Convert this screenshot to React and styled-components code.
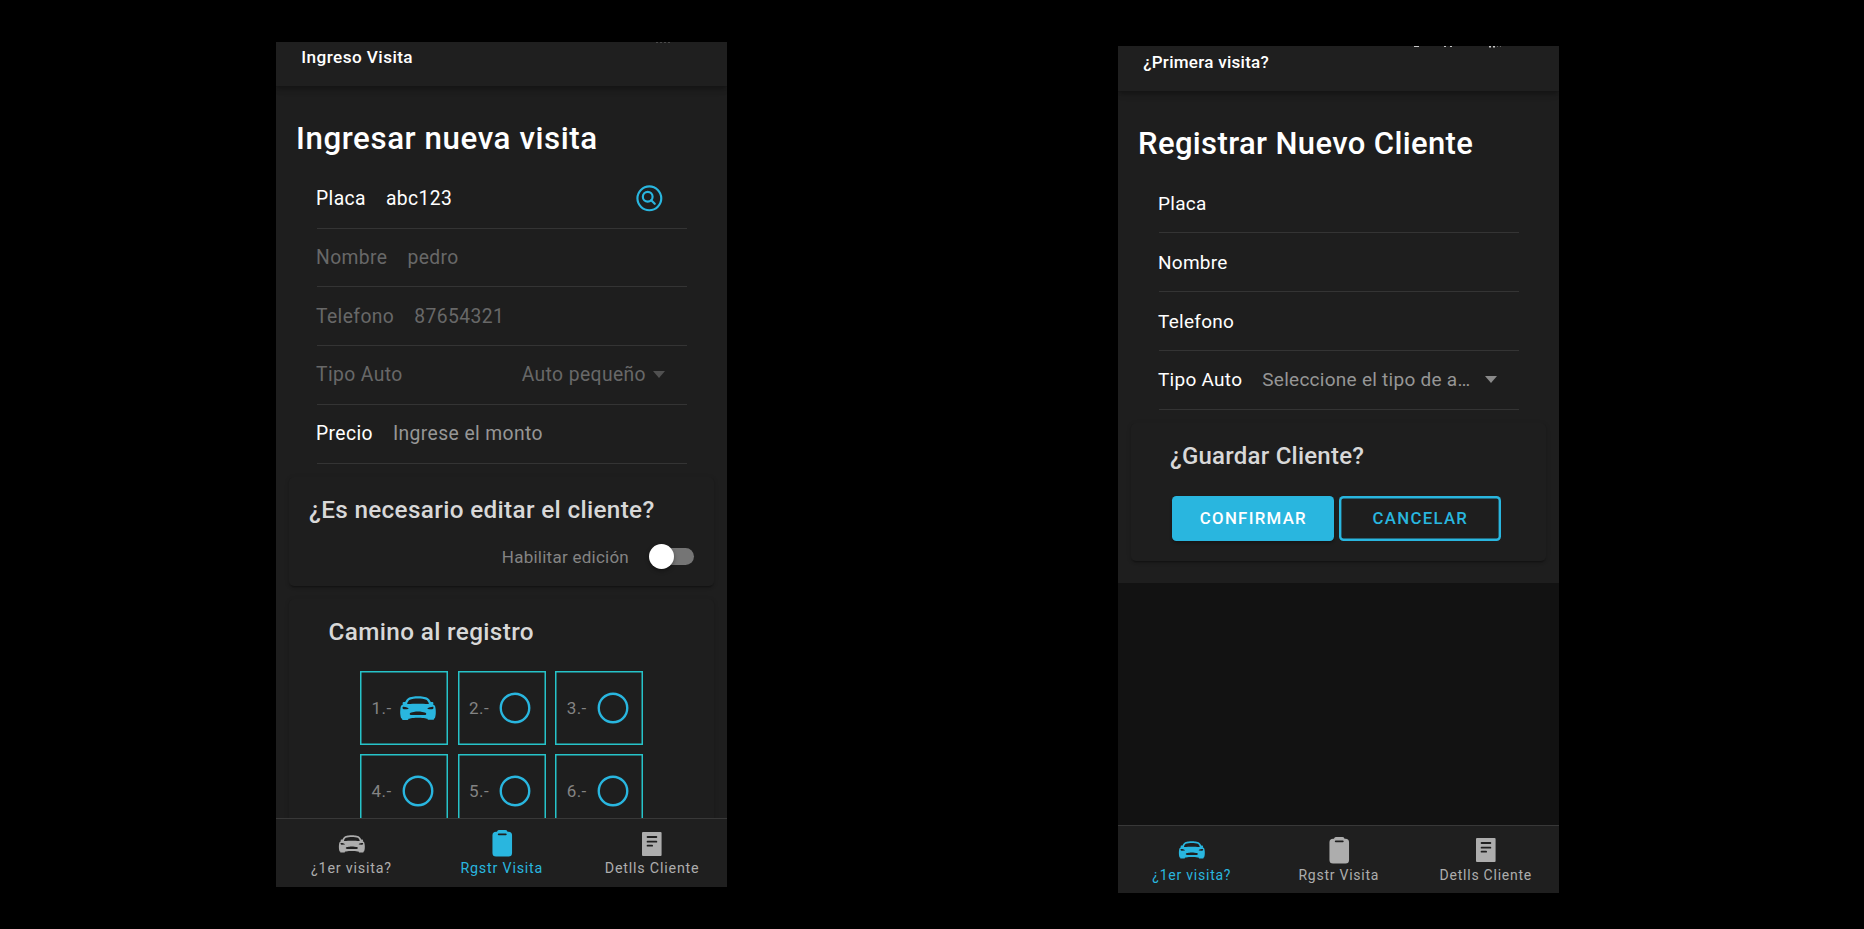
import React from "react";
import styled, { createGlobalStyle } from "styled-components";
import {
  IoCarSport,
  IoClipboard,
  IoEllipseOutline,
  IoSearchCircleOutline,
} from "react-icons/io5";

const CYAN = "#29b6df";

const GlobalStyle = createGlobalStyle`
  *, *::before, *::after { box-sizing: border-box; }
  body {
    margin: 0;
    background: #000;
    font-family: Roboto, "Liberation Sans", sans-serif;
    color: #fff;
  }
  svg { display: block; flex: none; }
`;

const Page = styled.main`
  display: flex;
  align-items: flex-start;
  gap: 391px;
  width: 1864px;
  height: 929px;
  padding-left: 276px;
  overflow: hidden;
`;

const Phone = styled.section`
  display: flex;
  flex-direction: column;
  width: ${(p) => p.$width}px;
  height: ${(p) => p.$height}px;
  margin-top: ${(p) => p.$top}px;
  background: #121212;
  overflow: hidden;
`;

const Header = styled.header`
  position: relative;
  z-index: 1;
  flex: none;
  height: ${(p) => p.$height}px;
  padding-left: 25.2px;
  background: #1f1f1f;
  box-shadow: 0 2px 4px -1px rgba(0, 0, 0, 0.2), 0 4px 5px rgba(0, 0, 0, 0.14),
    0 1px 10px rgba(0, 0, 0, 0.12);
  font-size: ${(p) => p.$size}px;
  font-weight: 500;
  letter-spacing: ${(p) => p.$spacing}px;
  line-height: ${(p) => p.$line}px;
`;

const StatusRemnant = styled.svg`
  position: absolute;
  top: 0;
  left: ${(p) => p.$left}px;
`;

const Content = styled.div`
  display: flex;
  flex-direction: column;
  flex: ${(p) => (p.$fill ? "1 1 0" : "none")};
  min-height: 0;
  padding-bottom: ${(p) => (p.$fill ? 0 : 22)}px;
  background: #1e1e1e;
  overflow: hidden;
`;

const Spacer = styled.div`
  flex: 1;
`;

const Title = styled.h1`
  flex: none;
  margin: 33px 0 11px 20px;
  font-size: ${(p) => p.$size}px;
  font-weight: 500;
  letter-spacing: ${(p) => p.$spacing}px;
  line-height: 40px;
`;

const List = styled.div`
  flex: none;
  margin: 0 40px 0 40.6px;
  font-size: ${(p) => p.$size}px;
  letter-spacing: ${(p) => p.$spacing}px;
`;

const Row = styled.div`
  display: flex;
  align-items: center;
  height: 58.75px;
  padding-right: ${(p) => p.$end || 22}px;
  border-bottom: 1px solid #343434;
  color: ${(p) => (p.$disabled ? "#686868" : "#fff")};
  white-space: pre;
`;

const Label = styled.span`
  margin: 0 20px 0 -0.6px;
`;

const Value = styled.span`
  color: ${(p) => (p.$placeholder ? "#969696" : "inherit")};
  margin-left: ${(p) => (p.$right ? "auto" : 0)};
`;

const Trailing = styled.span`
  margin-left: ${(p) => (p.$gap ? `${p.$gap}px` : "auto")};
  color: ${(p) => p.$color};
`;

const Card = styled.section`
  flex: none;
  margin: 13px 12.6px 0;
  padding: 17px 20px 16px 20.4px;
  border-radius: 5px;
  background: #1e1e1e;
  box-shadow: 0 3px 1px -2px rgba(0, 0, 0, 0.2), 0 2px 2px rgba(0, 0, 0, 0.14),
    0 1px 5px rgba(0, 0, 0, 0.12);
`;

const CardTitle = styled.h2`
  margin: 0 0 0 ${(p) => p.$indent || 0}px;
  font-size: ${(p) => p.$size}px;
  font-weight: 500;
  letter-spacing: ${(p) => p.$spacing}px;
  line-height: 32px;
  color: #d8d8d8;
  white-space: nowrap;
`;

const ToggleRow = styled.div`
  display: flex;
  align-items: center;
  justify-content: flex-end;
  gap: 20px;
  height: 26px;
  margin-top: 18px;
  font-size: 17px;
  letter-spacing: 0.25px;
  color: #848484;
`;

const Track = styled.span`
  display: flex;
  align-items: center;
  width: 45.4px;
  height: 17.6px;
  border-radius: 9px;
  background: linear-gradient(90deg, transparent 8px, #757575 8px);
`;

const Knob = styled.span`
  flex: none;
  width: 25px;
  height: 25px;
  border-radius: 50%;
  background: #fff;
  box-shadow: 0 2px 4px rgba(0, 0, 0, 0.35);
`;

const Grid = styled.div`
  display: grid;
  grid-template-columns: repeat(3, 88px);
  grid-auto-rows: 74px;
  justify-content: center;
  gap: 9px 9.6px;
  margin-top: 23.5px;
`;

const Cell = styled.div`
  display: flex;
  align-items: center;
  gap: 7.2px;
  padding-left: 11.4px;
  box-shadow: inset 0 0 0 1.5px #26c3c9;
  font-size: 17px;
  letter-spacing: 0.45px;
  color: #848484;
`;

const CellIcon = styled.span`
  color: ${CYAN};
`;

const Buttons = styled.div`
  display: flex;
  gap: 5px;
  margin: 24.5px 0 4.5px 21.4px;
`;

const Button = styled.button`
  width: 162px;
  height: 44.4px;
  padding: 0;
  border: 0;
  border-radius: 4.5px;
  background: ${(p) => (p.$solid ? CYAN : "transparent")};
  box-shadow: ${(p) =>
    p.$solid ? "0 2px 3px rgba(0, 0, 0, 0.3)" : `inset 0 0 0 2.4px ${CYAN}`};
  color: ${(p) => (p.$solid ? "#fff" : CYAN)};
  font: 500 16.8px Roboto, "Liberation Sans", sans-serif;
  letter-spacing: 1.3px;
`;

const TabBar = styled.nav`
  position: relative;
  z-index: 1;
  display: grid;
  grid-template-columns: repeat(3, 1fr);
  flex: none;
  height: ${(p) => p.$height}px;
  border-top: 1px solid #383838;
  background: #1f1f1f;
  font-size: ${(p) => p.$size}px;
  letter-spacing: ${(p) => p.$spacing}px;
`;

const Tab = styled.div`
  display: flex;
  flex-direction: column;
  align-items: center;
  padding: 10px 0 0 0.6px;
  color: ${(p) => (p.$active ? CYAN : "#adadad")};
  line-height: 20px;
`;

const TabIcon = styled.span`
  display: flex;
  align-items: center;
  height: 29px;
`;

function Caret() {
  return (
    <svg width="12" height="7" viewBox="0 0 12 7">
      <path d="M0 0h12L6 7z" fill="currentColor" />
    </svg>
  );
}

function DocumentIcon() {
  return (
    <svg width="19.6" height="24" viewBox="0 0 60 72" preserveAspectRatio="none">
      <rect width="60" height="72" rx="3" fill="currentColor" />
      <path
        d="M17 15h27M17 29h27M17 41h14"
        stroke="#1f1f1f"
        strokeWidth="5.5"
        strokeLinecap="round"
      />
    </svg>
  );
}

function Tabs({ active, height, size, spacing }) {
  const tabs = [
    ["¿1er visita?", <IoCarSport size={27.7} />],
    ["Rgstr Visita", <IoClipboard size={28.5} />],
    ["Detlls Cliente", <DocumentIcon />],
  ];
  return (
    <TabBar $height={height} $size={size} $spacing={spacing}>
      {tabs.map(([label, icon], i) => (
        <Tab key={label} $active={i === active}>
          <TabIcon>{icon}</TabIcon>
          <span>{label}</span>
        </Tab>
      ))}
    </TabBar>
  );
}

function VisitScreen() {
  return (
    <Phone $width={451} $height={845.4} $top={42}>
      <Header $height={43.8} $line={31} $size={17.2} $spacing={0.43}>
        Ingreso Visita
        <StatusRemnant $left={380} width="15" height="2" fill="#4a4a4a">
          <path d="M0 0h2v1h-2zM4 0h2v1h-2zM8 0h2v1h-2zM12 0h2v1h-2z" />
        </StatusRemnant>
      </Header>
      <Content $fill>
        <Title $size={31.3} $spacing={0.58}>
          Ingresar nueva visita
        </Title>
        <List $size={19.3} $spacing={0.4}>
          <Row $end={20}>
            <Label>Placa</Label>
            <Value>abc123</Value>
            <Trailing $color={CYAN}>
              <IoSearchCircleOutline size={34.7} />
            </Trailing>
          </Row>
          <Row $disabled>
            <Label>Nombre</Label>
            <Value>pedro</Value>
          </Row>
          <Row $disabled>
            <Label>Telefono</Label>
            <Value>87654321</Value>
          </Row>
          <Row $disabled>
            <Label>Tipo Auto</Label>
            <Value $right>Auto pequeño</Value>
            <Trailing $gap={7} $color="#505050">
              <Caret />
            </Trailing>
          </Row>
          <Row>
            <Label>Precio</Label>
            <Value $placeholder>Ingrese el monto</Value>
          </Row>
        </List>
        <Card>
          <CardTitle $size={24.3} $spacing={0.33}>
            ¿Es necesario editar el cliente?
          </CardTitle>
          <ToggleRow>
            Habilitar edición
            <Track>
              <Knob />
            </Track>
          </ToggleRow>
        </Card>
        <Card>
          <CardTitle $size={24.3} $spacing={0.36} $indent={19.5}>
            Camino al registro
          </CardTitle>
          <Grid>
            {[1, 2, 3, 4, 5, 6].map((n) => (
              <Cell key={n}>
                {n}.-
                <CellIcon>
                  {n === 1 ? <IoCarSport size={38} /> : <IoEllipseOutline size={38} />}
                </CellIcon>
              </Cell>
            ))}
          </Grid>
        </Card>
      </Content>
      <Tabs active={1} height={69.4} size={14.3} spacing={0.8} />
    </Phone>
  );
}

function ClientScreen() {
  return (
    <Phone $width={441} $height={846.7} $top={46}>
      <Header $height={44.7} $line={32} $size={17} $spacing={0.28}>
        ¿Primera visita?
        <StatusRemnant $left={296} width="90" height="2" fill="#c8c8c8">
          <path d="M0 0h5v1h-5zM30 0h2v1h-2zM36 0h2v1h-2zM75 0h2v1.5h-2zM79 0h2v1.5h-2z" />
          <path d="M83 0h1v1h-1zM86 0h1v1h-1z" fill="#666" />
        </StatusRemnant>
      </Header>
      <Content>
        <Title $size={31} $spacing={0.38}>
          Registrar Nuevo Cliente
        </Title>
        <List $size={19} $spacing={0.27}>
          <Row>
            <Label>Placa</Label>
          </Row>
          <Row>
            <Label>Nombre</Label>
          </Row>
          <Row>
            <Label>Telefono</Label>
          </Row>
          <Row>
            <Label>Tipo Auto</Label>
            <Value $placeholder>Seleccione el tipo de a…</Value>
            <Trailing $color="#8a8a8a">
              <Caret />
            </Trailing>
          </Row>
        </List>
        <Card>
          <CardTitle $size={24} $spacing={0.24} $indent={19}>
            ¿Guardar Cliente?
          </CardTitle>
          <Buttons>
            <Button $solid>CONFIRMAR</Button>
            <Button>CANCELAR</Button>
          </Buttons>
        </Card>
      </Content>
      <Spacer />
      <Tabs active={0} height={67.9} size={14} spacing={0.76} />
    </Phone>
  );
}

export default function App() {
  return (
    <>
      <GlobalStyle />
      <Page>
        <VisitScreen />
        <ClientScreen />
      </Page>
    </>
  );
}
